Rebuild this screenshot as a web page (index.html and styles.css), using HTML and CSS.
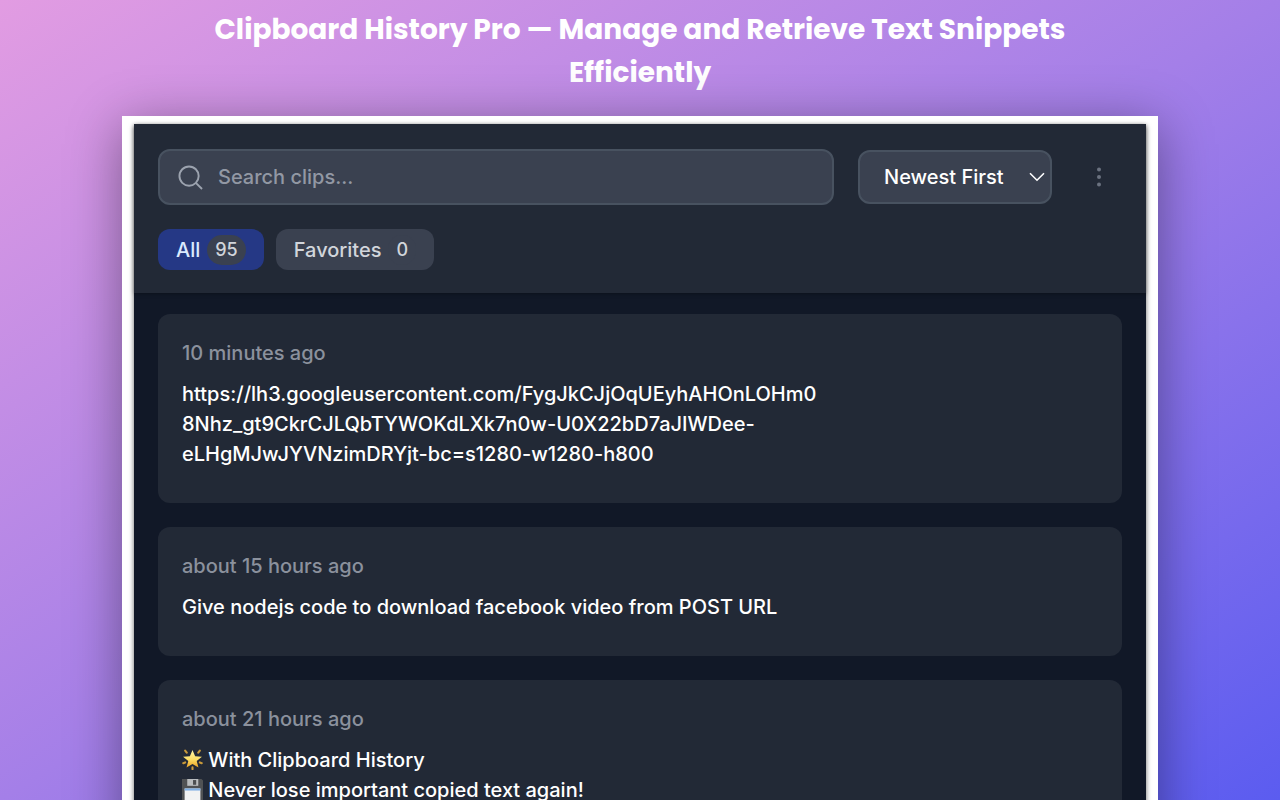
FILE: index.html
```html
<!DOCTYPE html>
<html lang="en">
<head>
    <meta charset="UTF-8">
    <meta name="viewport" content="width=device-width, initial-scale=1.0">
    <title>Clipboard History Pro</title>
    <link rel="stylesheet" href="styles.css">
</head>
<body>
    <h1>Clipboard History Pro — Manage and Retrieve Text Snippets Efficiently</h1>

    <main class="frame">
        <div class="app">
            <!-- Search, sort and tabs -->
            <header class="toolbar">
                <div class="controls">
                    <label class="search">
                        <svg class="search-icon" viewBox="0 0 26 26" aria-hidden="true">
                            <circle cx="11.5" cy="11.5" r="10"/>
                            <path d="M18.8 18.8L25 25"/>
                        </svg>
                        <input type="text" id="search" placeholder="Search clips..." aria-label="Search clips">
                    </label>
                    <div class="sort">
                        <select id="sort" aria-label="Sort order">
                            <option>Newest First</option>
                            <option>Oldest First</option>
                        </select>
                        <svg class="chevron" viewBox="0 0 16 10" aria-hidden="true">
                            <path d="M1 1.2L8 8.2L15 1.2"/>
                        </svg>
                    </div>
                    <button class="menu-button" aria-label="Menu">
                        <svg viewBox="0 0 6 20" aria-hidden="true">
                            <circle cx="3" cy="2.6" r="2"/>
                            <circle cx="3" cy="10" r="2"/>
                            <circle cx="3" cy="17.4" r="2"/>
                        </svg>
                    </button>
                </div>
                <nav class="tabs">
                    <button class="tab active">All <span class="count">95</span></button>
                    <button class="tab">Favorites <span class="count">0</span></button>
                </nav>
            </header>

            <!-- Saved clips -->
            <section class="clips">
                <article class="clip">
                    <time>10 minutes ago</time>
                    <p>https://lh3.googleusercontent.com/FygJkCJjOqUEyhAHOnLOHm0<br>8Nhz_gt9CkrCJLQbTYWOKdLXk7n0w-U0X22bD7aJIWDee-<br>eLHgMJwJYVNzimDRYjt-bc=s1280-w1280-h800</p>
                </article>
                <article class="clip">
                    <time>about 15 hours ago</time>
                    <p>Give nodejs code to download facebook video from POST URL</p>
                </article>
                <article class="clip">
                    <time>about 21 hours ago</time>
                    <p>
                        <svg class="emoji" viewBox="0 0 20 20" aria-hidden="true">
                            <defs>
                                <linearGradient id="star" x1="0" y1="0" x2="0" y2="1">
                                    <stop offset="0" stop-color="#fff6a8"/>
                                    <stop offset="0.55" stop-color="#fbdc62"/>
                                    <stop offset="1" stop-color="#e9a126"/>
                                </linearGradient>
                            </defs>
                            <path d="M3 1.5L4.5 3.5M17 1.5L15.5 3.5M1.2 13.5L3 12.8M18.8 13.5L17 12.8M10 17.5V19.2" stroke="#c99a3a" stroke-width="2" stroke-linecap="round"/>
                            <path d="M10 1L12.5 6.9L19 7.4L14 11.5L15.7 17.6L10 14.2L4.3 17.6L6 11.5L1 7.4L7.5 6.9Z" fill="url(#star)"/>
                        </svg>
                        With Clipboard History<br>
                        <svg class="emoji" viewBox="0 0 20 20" aria-hidden="true">
                            <path d="M0 0H18.5L20 1.5V20H0Z" fill="#505254"/>
                            <rect x="5" y="0" width="10.5" height="6.5" fill="#b9bcbe"/>
                            <rect x="10.5" y="1" width="3" height="4.5" fill="#4c4e50"/>
                            <rect x="2.5" y="9" width="15" height="11" fill="#f1f2f3"/>
                            <rect x="2.5" y="9" width="15" height="2" fill="#80b0e4"/>
                        </svg>
                        Never lose important copied text again!
                    </p>
                </article>
            </section>
        </div>
    </main>
</body>
</html>
```
FILE: styles.css
```css
* {
    box-sizing: border-box;
}

body {
    display: flex;
    flex-direction: column;
    height: 100vh;
    margin: 0;
    overflow: hidden;
    font-family: 'Inter', sans-serif;
    font-size: 20px;
    font-weight: 500;
    line-height: 30px;
    background: linear-gradient(to bottom right, #e29ce2 0%, #a47fe8 50%, #5b5cf0 100%);
}

h1 {
    margin: 8px 200px 22px;
    text-align: center;
    color: white;
    font-family: 'Poppins', 'Inter', sans-serif;
    font-size: 28px;
    font-weight: 700;
    line-height: 43px;
}

.frame {
    flex: 1 0 auto;
    margin: 0 122px;
    padding: 8px 12px 0;
    background-color: white;
    box-shadow: 0 10px 50px rgba(0, 0, 0, 0.4);
}

.app {
    height: 100%;
    background-color: #111827;
    box-shadow: 0 2px 5px rgba(0, 0, 0, 0.6);
}

/* Toolbar */
.toolbar {
    padding: 25px 24px 23px;
    background-color: #222936;
    box-shadow: 0 1px 4px rgba(0, 0, 0, 0.3);
}

.controls {
    display: flex;
    align-items: center;
    gap: 24px;
}

.search {
    display: flex;
    flex: 1;
    align-items: center;
    gap: 15px;
    height: 56px;
    padding: 0 18px;
    background-color: #3a4150;
    border: 2px solid #485260;
    border-radius: 12px;
}

.search-icon {
    width: 25px;
    height: 25px;
    fill: none;
    stroke: #9ca3af;
    stroke-width: 2;
}

.search input {
    flex: 1;
    min-width: 0;
    padding: 0;
    color: white;
    font: inherit;
    background: none;
    border: none;
    outline: none;
}

.search input::placeholder {
    color: #9298a4;
    opacity: 1;
}

.sort {
    display: grid;
    align-items: center;
}

.sort select,
.chevron {
    grid-area: 1 / 1;
}

.sort select {
    width: 194px;
    height: 54px;
    padding: 0 24px;
    color: white;
    font: inherit;
    background-color: #3a4150;
    border: 2px solid #485260;
    border-radius: 12px;
    appearance: none;
}

.chevron {
    justify-self: end;
    width: 16px;
    height: 10px;
    margin-right: 7px;
    fill: none;
    stroke: white;
    stroke-width: 1.6;
    pointer-events: none;
}

.menu-button {
    display: grid;
    place-items: center;
    width: 46px;
    height: 46px;
    padding: 0;
    background: none;
    border: none;
}

.menu-button svg {
    width: 6px;
    height: 20px;
    fill: #6b7280;
}

/* Tabs */
.tabs {
    display: flex;
    gap: 12px;
    margin-top: 24px;
}

.tab {
    display: flex;
    align-items: center;
    gap: 7px;
    height: 41px;
    padding: 0 18px;
    color: #d1d5db;
    font: inherit;
    background-color: #3a4150;
    border: none;
    border-radius: 12px;
}

.tab.active {
    color: #dbeafe;
    background-color: #253885;
}

.count {
    padding: 0 8px;
    color: #d1d5db;
    font-size: 18px;
    background-color: #3a4150;
    border-radius: 15px;
}

/* Clips */
.clips {
    display: flex;
    flex-direction: column;
    gap: 24px;
    padding: 21px 24px;
}

.clip {
    padding: 24px 24px 34px;
    background-color: #222936;
    border-radius: 12px;
}

.clip time {
    color: #8b919d;
}

.clip p {
    margin: 11px 0 0;
    color: white;
}

.emoji {
    width: 21px;
    height: 21px;
    vertical-align: -3px;
}
```
